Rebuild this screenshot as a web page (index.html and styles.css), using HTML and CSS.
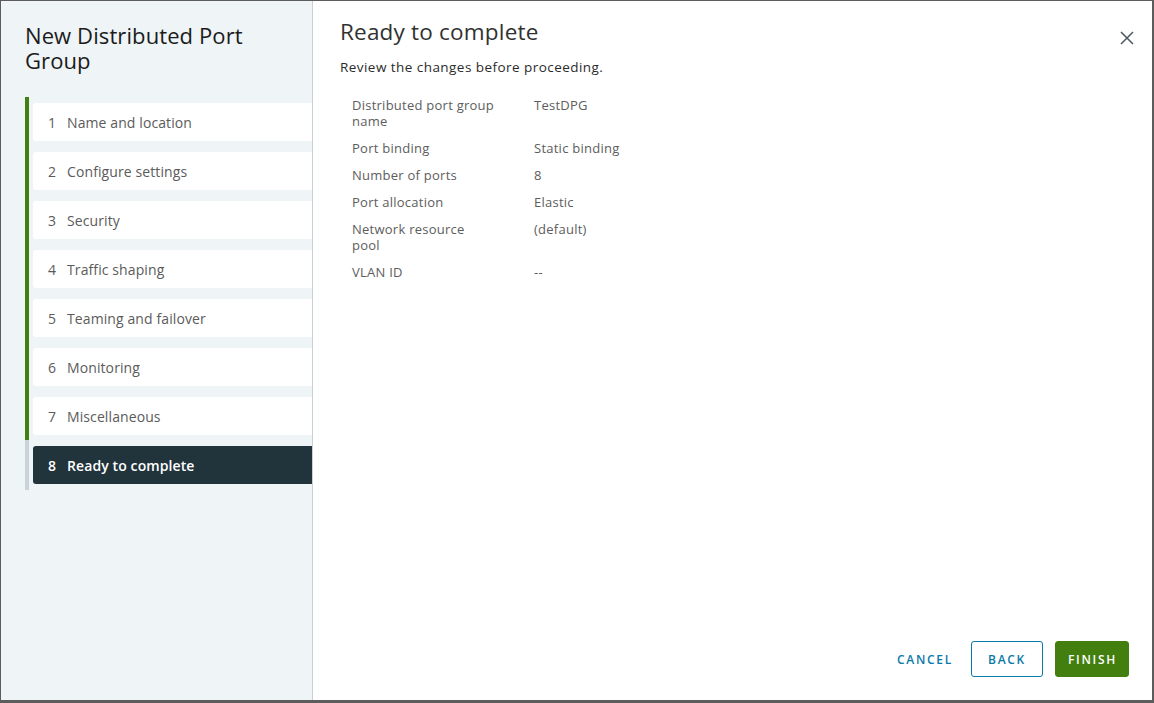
FILE: index.html
```html
<!DOCTYPE html>
<html>
<head>
<meta charset="utf-8">
<link rel="stylesheet" href="styles.css">
</head>
<body>
<div class="modal">
  <aside class="side">
    <h1 class="side-title">New Distributed Port Group</h1>
    <div class="steps">
      <div class="step done"><span class="num">1</span><span>Name and location</span></div>
      <div class="step done"><span class="num">2</span><span>Configure settings</span></div>
      <div class="step done"><span class="num">3</span><span>Security</span></div>
      <div class="step done"><span class="num">4</span><span>Traffic shaping</span></div>
      <div class="step done"><span class="num">5</span><span>Teaming and failover</span></div>
      <div class="step done"><span class="num">6</span><span>Monitoring</span></div>
      <div class="step done"><span class="num">7</span><span>Miscellaneous</span></div>
      <div class="step current"><span class="num">8</span><span>Ready to complete</span></div>
    </div>
  </aside>
  <main class="content">
    <div class="head">
      <h2 class="title">Ready to complete</h2>
      <button class="close" aria-label="Close">
        <svg width="14" height="14" viewBox="0 0 14 14"><path d="M1 1 L13 13 M13 1 L1 13" stroke="#49575f" stroke-width="1.5" fill="none"/></svg>
      </button>
    </div>
    <p class="desc">Review the changes before proceeding.</p>
    <div class="summary">
      <div class="label">Distributed port group name</div><div class="value">TestDPG</div>
      <div class="label">Port binding</div><div class="value">Static binding</div>
      <div class="label">Number of ports</div><div class="value">8</div>
      <div class="label">Port allocation</div><div class="value">Elastic</div>
      <div class="label">Network resource pool</div><div class="value">(default)</div>
      <div class="label">VLAN ID</div><div class="value">--</div>
    </div>
    <div class="footer">
      <button class="btn link">CANCEL</button>
      <button class="btn outline">BACK</button>
      <button class="btn primary">FINISH</button>
    </div>
  </main>
</div>
</body>
</html>
```
FILE: styles.css
```css
* { box-sizing: border-box; }
html, body { margin: 0; padding: 0; height: 100%; }
body {
  background: #5c5c5c;
  font-family: "Open Sans", "Liberation Sans", sans-serif;
  padding: 1px 2px 3px 1px;
  height: 703px;
}
.modal {
  display: flex;
  height: 699px;
  background: #fff;
}
.side {
  width: 312px;
  flex: none;
  background: #eff4f7;
  border-right: 1px solid #c7d0d6;
  padding: 22px 0 0 24px;
}
.side-title {
  margin: 0;
  font-weight: 400;
  font-size: 22px;
  line-height: 25px;
  color: #1b1b1b;
  width: 250px;
  letter-spacing: 0.1px;
}
.steps {
  margin-top: 24px;
  border-left: 4px solid #3f7f14;
  padding: 6px 0 0 4px;
  display: flex;
  flex-direction: column;
  gap: 11px;
  position: relative;
}
.steps::after {
  content: "";
  position: absolute;
  left: -4px;
  bottom: 0;
  width: 4px;
  height: 50px;
  background: #c9d3d9;
}
.step {
  height: 38px;
  background: #fff;
  border-radius: 3px 0 0 3px;
  display: flex;
  align-items: center;
  padding-left: 15px;
  font-size: 14px;
  letter-spacing: 0.1px;
  color: #5b5b5b;
}
.step .num { width: 19px; }
.step.current {
  background: #21333b;
  color: #fff;
  font-weight: 600;
  margin-bottom: 6px;
}
.content {
  flex: 1;
  display: flex;
  flex-direction: column;
  padding: 0 18px 23px 27px;
}
.head {
  display: flex;
  justify-content: space-between;
  align-items: flex-start;
  padding-top: 16px;
}
.title {
  margin: 0;
  font-weight: 400;
  font-size: 22.5px;
  line-height: 30px;
  color: #313131;
  letter-spacing: 0.2px;
}
.close {
  border: none;
  background: none;
  padding: 0;
  margin: 14px 0 0 0;
  width: 14px;
  height: 14px;
  cursor: pointer;
}
.desc {
  margin: 11px 0 0;
  font-size: 13.5px;
  line-height: 18px;
  letter-spacing: 0.45px;
  color: #2b2b2b;
}
.summary {
  margin: 21px 0 0 12px;
  display: grid;
  grid-template-columns: 182px 1fr;
  row-gap: 11px;
  font-size: 13px;
  line-height: 16px;
  letter-spacing: 0.25px;
  color: #5d5d5d;
}
.summary .label { width: 143px; }
.footer {
  margin-top: auto;
  margin-right: 5px;
  display: flex;
  justify-content: flex-end;
  gap: 12px;
}
.btn {
  font-family: inherit;
  height: 36px;
  font-size: 12px;
  font-weight: 600;
  letter-spacing: 1.7px;
  border-radius: 3px;
  cursor: pointer;
  padding: 0 12px;
}
.btn.link {
  background: none;
  border: 1px solid transparent;
  color: #0b79a8;
  padding: 0 10px;
  margin-right: -5px;
}
.btn.outline {
  background: #fff;
  border: 1px solid #0b79a8;
  color: #0b79a8;
  width: 72px;
}
.btn.primary {
  background: #437f0f;
  border: 1px solid #437f0f;
  color: #fff;
  width: 74px;
}
```
